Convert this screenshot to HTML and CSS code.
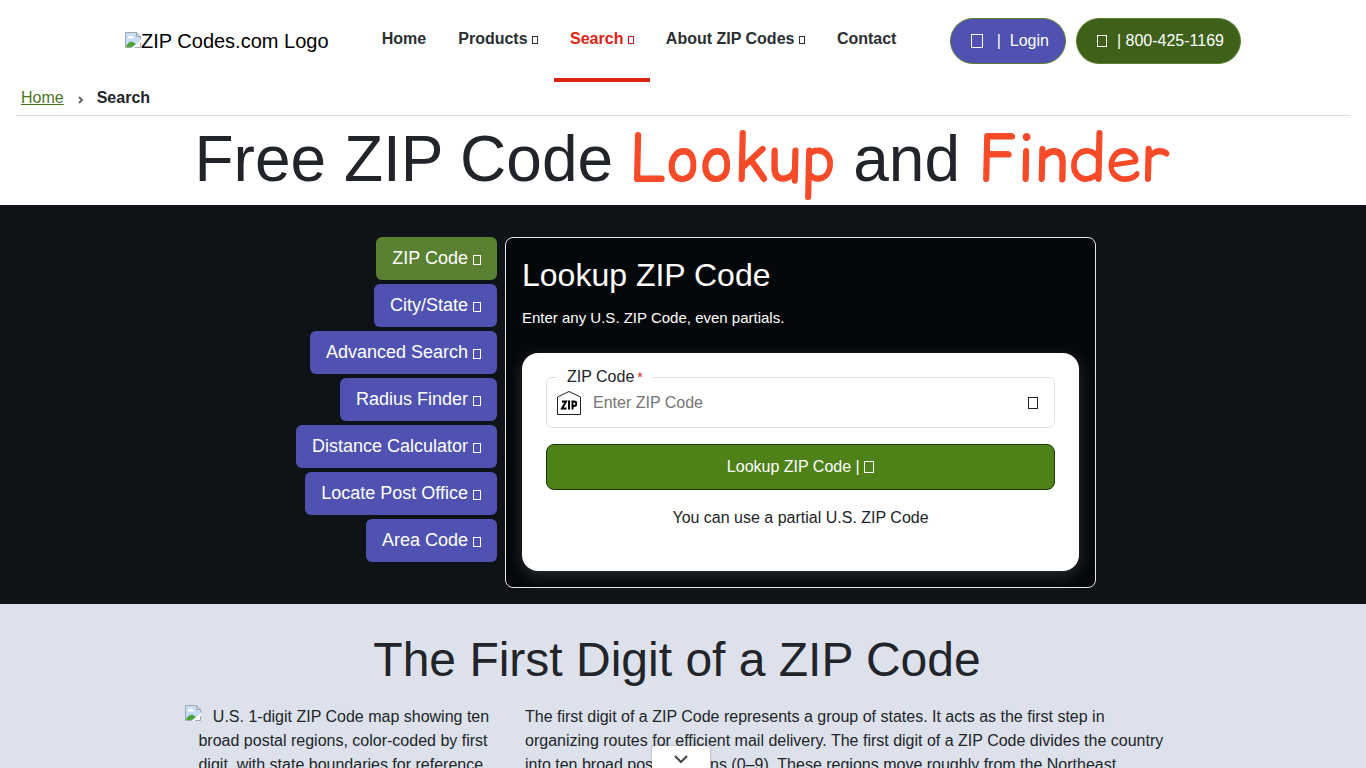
FILE: index.html
```
<!DOCTYPE html>
<html lang="en">
<head>
  <meta charset="UTF-8">
  <meta name="viewport" content="width=device-width, initial-scale=1.0">
  <title>Free ZIP Code Lookup and Finder</title>
  <link rel="stylesheet" href="styles.css">
</head>
<body>
  <svg width="0" height="0" class="sprite" aria-hidden="true">
    <symbol id="missing-image" viewBox="0 0 16 16">
      <path d="M.5 15.500V.5h11l4 4v11z" fill="#c9dcf5"/>
      <path d="M3 5.500c0-1 1-2 2-1.500 1-1 3-.5 3 1 1 0 1 1.500 0 1.500H4c-1 0-1-.5-1-1z" fill="#fff"/>
      <path d="M1 15c1-4 4-6 7-5l3 2-4 3z" fill="#4ea63a"/>
      <path d="M.5 15.500V.5h11l4 4v3M11.500.5v4h4M.5 15.500h6" fill="none" stroke="#a3a8ad"/>
      <path d="M7 16l9-8v8z" fill="#fff"/>
      <path d="M10 15.500h5.500V11" fill="none" stroke="#a3a8ad"/>
    </symbol>
  </svg>

  <header class="header container">
    <a href="#" class="logo"><svg class="missing" aria-hidden="true"><use href="#missing-image"/></svg>ZIP Codes.com Logo</a>
    <nav class="nav">
      <a href="#" class="nav-link">Home</a>
      <a href="#" class="nav-link">Products <i class="glyph glyph-xs"></i></a>
      <a href="#" class="nav-link active">Search <i class="glyph glyph-xs"></i></a>
      <a href="#" class="nav-link">About ZIP Codes <i class="glyph glyph-xs"></i></a>
      <a href="#" class="nav-link">Contact</a>
    </nav>
    <div class="header-actions">
      <a href="#" class="pill pill-login"><i class="glyph glyph-lg"></i><span>|&nbsp; Login</span></a>
      <a href="tel:8004251169" class="pill pill-phone"><i class="glyph glyph-md"></i><span>| 800-425-1169</span></a>
    </div>
  </header>

  <nav class="breadcrumb" aria-label="Breadcrumb">
    <a href="#">Home</a>
    <svg class="crumb-arrow" viewBox="0 0 6 8" aria-hidden="true"><path d="M1 1l3 3-3 3"/></svg>
    <strong>Search</strong>
  </nav>

  <main>
    <h1 class="page-title">Free ZIP Code <span class="script">Lookup</span> and <span class="script">Finder</span></h1>

    <section class="search">
      <div class="search-row">
        <div class="tabs">
          <button type="button" class="tab active">ZIP Code <i class="glyph glyph-sm"></i></button>
          <button type="button" class="tab">City/State <i class="glyph glyph-sm"></i></button>
          <button type="button" class="tab">Advanced Search <i class="glyph glyph-sm"></i></button>
          <button type="button" class="tab">Radius Finder <i class="glyph glyph-sm"></i></button>
          <button type="button" class="tab">Distance Calculator <i class="glyph glyph-sm"></i></button>
          <button type="button" class="tab">Locate Post Office <i class="glyph glyph-sm"></i></button>
          <button type="button" class="tab">Area Code <i class="glyph glyph-sm"></i></button>
        </div>
        <div class="panel">
          <h2 class="panel-title">Lookup ZIP Code</h2>
          <p class="panel-text">Enter any U.S. ZIP Code, even partials.</p>
          <form class="card">
            <fieldset class="field">
              <legend><label for="zip">ZIP Code<span class="required">*</span></label></legend>
              <div class="field-row">
                <svg class="zip-icon" viewBox="0 0 24 24" aria-hidden="true">
                  <path d="M.5 23.500V6L12 .5 23.500 6v17.500z" fill="#fff" stroke="#222"/>
                  <path d="M5 10.500h4L5 17.500h4.500M12 9.500v9M15.500 18.500v-8h1.500a2 2 0 0 1 0 4.500h-1.500" fill="none" stroke="#000" stroke-width="2"/>
                </svg>
                <input type="text" id="zip" placeholder="Enter ZIP Code">
                <i class="glyph glyph-md"></i>
              </div>
            </fieldset>
            <button type="submit" class="submit">Lookup ZIP Code | <i class="glyph glyph-md"></i></button>
            <p class="hint">You can use a partial U.S. ZIP Code</p>
          </form>
        </div>
      </div>
    </section>

    <section class="digits">
      <div class="digits-inner">
        <h2 class="digits-title">The First Digit of a ZIP Code</h2>
        <div class="digits-row">
          <div class="map"><svg class="missing" aria-hidden="true"><use href="#missing-image"/></svg>U.S. 1-digit ZIP Code map showing ten broad postal regions, color-coded by first digit, with state boundaries for reference.</div>
          <p class="digits-text">The first digit of a ZIP Code represents a group of states. It acts as the first step in organizing routes for efficient mail delivery. The first digit of a ZIP Code divides the country into ten broad postal regions (0–9). These regions move roughly from the Northeast</p>
        </div>
      </div>
    </section>
  </main>

  <button type="button" class="drawer-toggle" aria-label="Expand">
    <svg viewBox="0 0 16 10" aria-hidden="true"><path d="M2 2l6 6 6-6"/></svg>
  </button>
</body>
</html>
```
FILE: styles.css
```
:root {
  --blue: #4f52b0;
  --green: #5a8131;
  --green-dark: #3e6019;
  --text: #212529;
  --red: #dc2314;
}

* {
  margin: 0;
  padding: 0;
  box-sizing: border-box;
}

body {
  font-family: "Liberation Sans", Arial, sans-serif;
  font-size: 16px;
  line-height: 24px;
  color: var(--text);
  background: #fff;
}

button,
input {
  font: inherit;
}

a {
  text-decoration: none;
}

.sprite {
  display: none;
}

.container {
  max-width: 1140px;
  margin: 0 auto;
  padding: 0 12px;
}

/* empty box glyphs */
.glyph {
  display: inline-block;
  border: 1px solid currentColor;
  width: 10px;
  height: 12px;
  flex: none;
  vertical-align: -1px;
}

.glyph-xs {
  width: 6px;
  height: 8px;
  vertical-align: 0;
}

.glyph-sm {
  width: 8px;
  height: 10px;
}

.glyph-lg {
  width: 12px;
  height: 14px;
}

.missing {
  width: 16px;
  height: 16px;
}

/* Header */
.header {
  display: flex;
  justify-content: space-between;
  align-items: center;
}

.logo {
  font-size: 20px;
  line-height: 30px;
  color: #000;
  white-space: nowrap;
}

.nav {
  display: flex;
}

.nav-link {
  padding: 27px 16px;
  border-bottom: 4px solid transparent;
  font-weight: bold;
  color: #2b2f33;
  white-space: nowrap;
}

.nav-link.active {
  color: var(--red);
  border-bottom-color: var(--red);
}

.header-actions {
  display: flex;
  gap: 10px;
}

.pill {
  display: flex;
  align-items: center;
  height: 46px;
  padding: 0 16px 0 20px;
  border: 1px solid var(--green);
  border-radius: 23px;
  color: #fff;
  white-space: nowrap;
}

.pill-login {
  gap: 14px;
  background: var(--blue);
}

.pill-phone {
  gap: 10px;
  background: var(--green-dark);
}

/* Breadcrumb */
.breadcrumb {
  display: flex;
  align-items: center;
  margin: 0 16px;
  padding: 4px 5px 5px;
  border-bottom: 1px solid #dcdddf;
}

.breadcrumb a {
  color: #4b751c;
  text-decoration: underline;
}

.crumb-arrow {
  width: 6px;
  height: 8px;
  margin: 4px 13px 0 14px;
}

.crumb-arrow path {
  fill: none;
  stroke: #666;
  stroke-width: 2;
}

.page-title {
  height: 89px;
  padding-top: 4px;
  font-size: 64px;
  line-height: 77px;
  font-weight: normal;
  text-align: center;
}

.script {
  font-family: "Comic Sans MS", "Comic Relief", "Comic Neue", cursive;
  color: #f64a29;
}

/* Search */
.search {
  padding: 32px 16px 16px;
  background: #0f1217;
}

.search-row {
  display: grid;
  grid-template-columns: 227px 1fr;
  gap: 8px;
  max-width: 826px;
  margin: 0 auto;
}

.tabs {
  display: flex;
  flex-direction: column;
  align-items: flex-end;
  gap: 4px;
}

.tab {
  padding: 8px 16px;
  border: none;
  border-radius: 6px;
  background: var(--blue);
  color: #fff;
  font-size: 18px;
  line-height: 27px;
  white-space: nowrap;
  cursor: pointer;
}

.tab.active {
  background: var(--green);
}

.panel {
  padding: 18px 16px 16px;
  border: 1px solid #e6e6e6;
  border-radius: 8px;
  background: #05080b;
  color: #fff;
}

.panel-title {
  margin-bottom: 12px;
  font-size: 32px;
  line-height: 38px;
  font-weight: normal;
}

.panel-text {
  margin-bottom: 23px;
  font-size: 15px;
}

.card {
  padding: 12px 24px 41px;
  border-radius: 16px;
  background: #fff;
  color: var(--text);
  box-shadow: 0 4px 16px rgba(255, 255, 255, 0.16);
}

.field {
  padding: 0 10px;
  border: 1px solid #dee2e6;
  border-radius: 6px;
  margin-bottom: 16px;
}

.field legend {
  padding: 0 10px;
}

.required {
  margin-left: 3px;
  font-size: 14px;
  color: var(--red);
}

.field-row {
  display: flex;
  align-items: center;
  padding-bottom: 10px;
  padding-right: 6px;
}

.zip-icon {
  width: 24px;
  height: 24px;
}

.field input {
  flex: 1;
  min-width: 0;
  height: 28px;
  padding: 0 12px;
  border: none;
  outline: none;
  background: none;
  color: var(--text);
}

.field input::placeholder {
  color: #757575;
}

.submit {
  display: block;
  width: 100%;
  height: 46px;
  border: 1px solid #173a0c;
  border-radius: 8px;
  background: #4e8117;
  color: #fff;
  cursor: pointer;
}

.hint {
  margin-top: 16px;
  text-align: center;
}

/* First digit */
.digits {
  padding: 27px 24px 16px 0;
  background: #dce1eb;
}

.digits-inner {
  max-width: 996px;
  margin: 0 auto;
  padding: 0 0 0 12px;
}

.digits-title {
  margin-bottom: 16px;
  font-size: 48px;
  line-height: 58px;
  font-weight: normal;
  text-align: center;
}

.digits-row {
  display: grid;
  grid-template-columns: 316px 1fr;
  gap: 24px;
}

.map {
  text-align: center;
}

.map .missing {
  float: left;
}

.drawer-toggle {
  position: fixed;
  bottom: 0;
  left: 50%;
  margin-left: -31px;
  width: 58px;
  height: 22px;
  border: none;
  border-radius: 4px 4px 0 0;
  background: #fff;
  box-shadow: 0 0 3px rgba(0, 0, 0, 0.3);
  cursor: pointer;
}

.drawer-toggle svg {
  display: block;
  width: 16px;
  height: 10px;
  margin: 4px auto 0;
}

.drawer-toggle path {
  fill: none;
  stroke: #444;
  stroke-width: 2;
}
```
